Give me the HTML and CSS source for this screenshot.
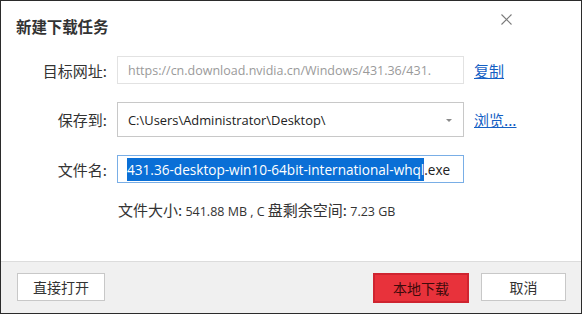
FILE: index.html
```html
<!DOCTYPE html>
<html lang="zh-CN">
<head>
<meta charset="utf-8">
<title>新建下载任务</title>
<link rel="stylesheet" href="styles.css">
</head>
<body>
<div class="dialog">
  <div class="header">
    <div class="title">新建下载任务</div>
    <svg class="close" width="11" height="11" viewBox="0 0 11 11"><path d="M0.5 0.5L10.5 10.5M10.5 0.5L0.5 10.5" stroke="#7a7a7a" stroke-width="1.1" fill="none"/></svg>
  </div>
  <div class="body">
    <div class="row r1">
      <div class="label">目标网址:</div>
      <div class="field url">https://cn.download.nvidia.cn/Windows/431.36/431.</div>
      <a class="link">复制</a>
    </div>
    <div class="row r2">
      <div class="label">保存到:</div>
      <div class="field path"><span>C:\Users\Administrator\Desktop\</span><span class="arrow"></span></div>
      <a class="link">浏览...</a>
    </div>
    <div class="row r3">
      <div class="label">文件名:</div>
      <div class="field name"><span class="sel">431.36-desktop-win10-64bit-international-whql</span><span>.exe</span></div>
    </div>
    <div class="info">
      <span class="cjk">文件大小:</span><span class="num">&nbsp;541.88 MB , C&nbsp;</span><span class="cjk">盘剩余空间:</span><span class="num">&nbsp;7.23 GB</span>
    </div>
  </div>
  <div class="footer">
    <button class="btn">直接打开</button>
    <div class="right">
      <button class="btn primary">本地下载</button>
      <button class="btn cancel">取消</button>
    </div>
  </div>
</div>
</body>
</html>
```

FILE: styles.css
```css
* { box-sizing: border-box; }
html, body { margin: 0; padding: 0; background: #fff; }
body { font-family: "Noto Sans CJK SC", "Noto Sans", sans-serif; }

.dialog {
  width: 582px;
  height: 314px;
  border: 1px solid #2b2b2b;
  display: flex;
  flex-direction: column;
  background: #fff;
}

.header {
  height: 49px;
  display: flex;
  align-items: flex-start;
  justify-content: space-between;
  padding: 0 69px 0 15px;
}
.title {
  font-size: 15.5px;
  font-weight: 700;
  color: #333;
  line-height: 20px;
  margin-top: 15px;
  letter-spacing: -0.1px;
}
.close { margin-top: 13px; }

.body {
  flex: 1;
  display: flex;
  flex-direction: column;
  padding-top: 6px;
}

.row {
  display: flex;
  align-items: center;
}
.r1 { height: 28px; }
.r2 { height: 35px; margin-top: 18px; }
.r3 { height: 28px; margin-top: 18px; }

.label {
  width: 106px;
  text-align: right;
  font-size: 15px;
  color: #333;
  margin-right: 10px;
}

.field {
  width: 347px;
  height: 100%;
  border: 1px solid #ddd;
  display: flex;
  align-items: center;
  padding-left: 10px;
  font-family: "Open Sans", "Noto Sans", sans-serif;
  font-size: 12.5px;
  color: #222;
  white-space: nowrap;
  overflow: hidden;
}
.url { color: #9a9a9a; border-color: #e2e2e2; }
.path { border-color: #c8c8c8; justify-content: space-between; padding-right: 11px; font-size: 12.9px; }
.arrow {
  width: 0; height: 0;
  border-left: 3px solid transparent;
  border-right: 3px solid transparent;
  border-top: 3px solid #8a8a8a;
  margin-top: 1px;
}
.name { border-color: #79aee6; padding-left: 9px; font-size: 13.6px; }
.sel {
  background: #0a6fd6;
  color: #fff;
  padding: 2px 0;
}

.link {
  margin-left: 10px;
  font-size: 15px;
  color: #1460c4;
  text-decoration: underline;
}

.info {
  margin-top: 16px;
  padding-left: 117px;
  color: #333;
  display: flex;
  align-items: baseline;
  height: 20px;
}
.info .cjk { font-size: 15px; }
.info .num { font-family: "Open Sans", "Noto Sans", sans-serif; font-size: 12.5px; }

.footer {
  height: 52px;
  border-top: 1px solid #dcdcdc;
  background: #f0f0f0;
  display: flex;
  justify-content: space-between;
  align-items: flex-start;
  padding: 11px 15px 0 16px;
}
.right { display: flex; gap: 12px; }

.btn {
  height: 28px;
  width: 88px;
  background: #fff;
  border: 1px solid #c8c8c8;
  font-family: "Noto Sans CJK SC", sans-serif;
  font-size: 14px;
  color: #333;
  padding: 0;
  line-height: 1;
}
.primary {
  width: 96px;
  height: 30px;
  background: #e8323b;
  border: 2px solid #cf2430;
  color: #3e0b0b;
}
.cancel { width: 85px; }
```
